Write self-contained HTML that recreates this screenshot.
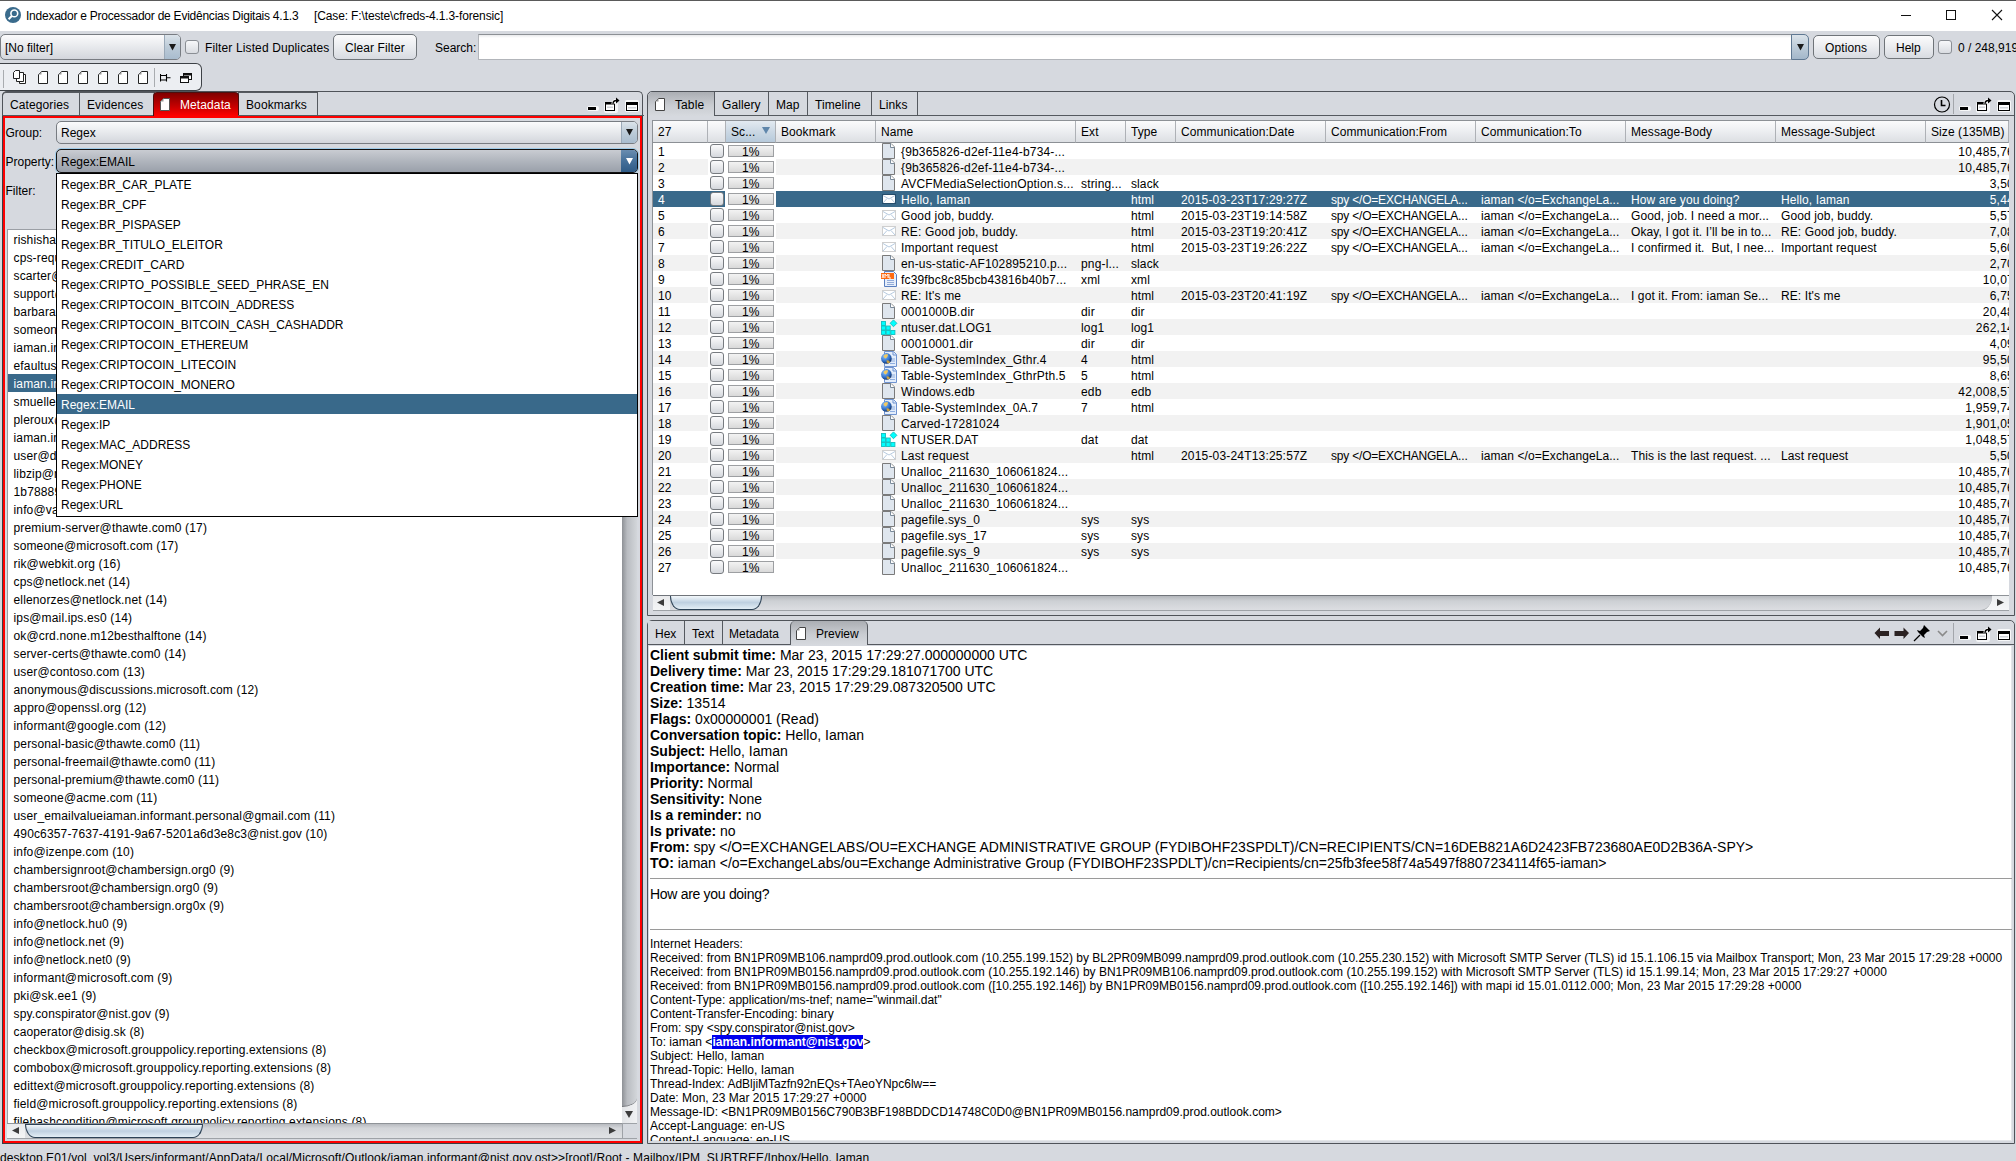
<!DOCTYPE html><html><head><meta charset="utf-8"><style>
*{margin:0;padding:0;box-sizing:border-box}
html,body{width:2016px;height:1161px;overflow:hidden;background:#d6d9df;font-family:"Liberation Sans",sans-serif;font-size:12px;color:#000}
div{position:absolute}
.t{white-space:pre}
.btn{border:1px solid #6f7479;border-radius:5px;background:linear-gradient(#fbfbfc,#eceef1 45%,#d8dbe1)}
.combo{border:1px solid #787c82;border-radius:5px;background:linear-gradient(#fbfbfc,#e9ebee 45%,#d3d6dc)}
.carrow{border-left:1px solid #9aa9b8;border-radius:0 4px 4px 0;background:linear-gradient(#dbe3ea,#bccbd8 50%,#a9bcce)}
.chk{border:1px solid #8a8e94;border-radius:3px;background:linear-gradient(#f7f8fa,#d9dce1)}
.tab{border:1px solid #55595f;border-bottom:none;background:#d6d9df}
.hdr{border-right:1px solid #b5b8bd;background:linear-gradient(#f9f9fa,#e8eaed 50%,#d9dce0)}
.pb{border:1px solid #9d9fa2;background:linear-gradient(#f3f3f3,#d9d9d9)}
.rchk{border:1px solid #777b80;border-radius:3px;background:linear-gradient(#fbfbfc,#d5d8dd)}
</style></head><body>
<div style="left:0px;top:0px;width:2016px;height:1px;background:#5a5a5a"></div>
<div style="left:0px;top:1px;width:2016px;height:30px;background:#fff"></div>
<svg style="position:absolute;left:5px;top:7px" width="16" height="16" viewBox="0 0 16 16"><circle cx="8" cy="8" r="8" fill="#3a6b8c"/><circle cx="9.3" cy="6.4" r="3.4" fill="none" stroke="#fff" stroke-width="1.6"/><line x1="7" y1="8.8" x2="3.6" y2="12.2" stroke="#fff" stroke-width="2"/></svg>
<div class="t" style="left:26px;top:9px;line-height:14px;font-size:12px;letter-spacing:-0.24px;color:#000">Indexador e Processador de Evidências Digitais 4.1.3</div>
<div class="t" style="left:314px;top:9px;line-height:14px;font-size:12px;letter-spacing:-0.13px;color:#000">[Case: F:\teste\cfreds-4.1.3-forensic]</div>
<div style="left:1901px;top:15px;width:10px;height:1px;background:#111"></div>
<div style="left:1946px;top:10px;width:10px;height:10px;border:1px solid #111"></div>
<svg style="position:absolute;left:1991px;top:9px" width="12" height="12"><path d="M1 1L11 11M11 1L1 11" stroke="#111" stroke-width="1.1"/></svg>
<div class="combo" style="left:0px;top:34px;width:181px;height:26px;"></div>
<div class="carrow" style="left:164px;top:35px;width:16px;height:24px;"></div>
<svg style="position:absolute;left:169px;top:44px" width="8" height="7"><path d="M0 0H7L3.5 6.5Z" fill="#1a1a1a"/></svg>
<div class="t" style="left:5px;top:41px;line-height:14px;font-size:12px;">[No filter]</div>
<div class="chk" style="left:185px;top:40px;width:14px;height:14px;"></div>
<div class="t" style="left:205px;top:41px;line-height:14px;font-size:12px;letter-spacing:0.13px">Filter Listed Duplicates</div>
<div class="btn" style="left:333px;top:34px;width:84px;height:26px;"></div>
<div class="t" style="left:345px;top:41px;line-height:14px;font-size:12px;letter-spacing:0.1px">Clear Filter</div>
<div class="t" style="left:435px;top:41px;line-height:14px;font-size:12px;">Search:</div>
<div style="left:478px;top:34px;width:1314px;height:26px;background:linear-gradient(#e9eaec,#fff 3px);border:1px solid #b2b5ba;border-top-color:#8c9095;border-right:none"></div>
<div style="left:1791px;top:34px;width:18px;height:26px;border:1px solid #5f7892;border-radius:0 5px 5px 0;background:linear-gradient(#dbe3ea,#bccbd8 50%,#a3b7ca)"></div>
<svg style="position:absolute;left:1797px;top:44px" width="8" height="7"><path d="M0 0H7L3.5 6.5Z" fill="#1a1a1a"/></svg>
<div class="btn" style="left:1813px;top:35px;width:67px;height:24px;"></div>
<div class="t" style="left:1825px;top:41px;line-height:14px;font-size:12px;letter-spacing:0.1px">Options</div>
<div class="btn" style="left:1884px;top:35px;width:50px;height:24px;"></div>
<div class="t" style="left:1896px;top:41px;line-height:14px;font-size:12px;">Help</div>
<div class="chk" style="left:1938px;top:40px;width:14px;height:14px;"></div>
<div class="t" style="left:1958px;top:41px;line-height:14px;font-size:12px;">0 / 248,919</div>
<div style="left:0px;top:63px;width:202px;height:28px;background:#eceef2;border:1px solid #3d4146;border-left:none;border-radius:0 6px 6px 0"></div>
<div style="left:3px;top:70px;width:1px;height:18px;background:#a9acb0"></div>
<div style="left:154px;top:68px;width:1px;height:19px;background:#a9acb0"></div>
<svg style="position:absolute;left:13px;top:70px" width="14" height="15"><path d="M6.5 4.5H12.5V13.5H6.5Z" fill="#fff" stroke="#222"/><path d="M3.5 2.5H10.5V11.5H3.5Z" fill="#fff" stroke="#222"/><path d="M2.5 0.5H6.5V8.5H0.5V2.5Z" fill="#fff" stroke="#222"/></svg>
<svg style="position:absolute;left:38px;top:71px" width="10" height="13"><path d="M3.5 0.5H9.5V12.5H0.5V3.5Z" fill="#fff" stroke="#222"/><path d="M0.5 3.5L3.5 0.5V3.5Z" fill="#999"/></svg>
<svg style="position:absolute;left:58px;top:71px" width="10" height="13"><path d="M3.5 0.5H9.5V12.5H0.5V3.5Z" fill="#fff" stroke="#222"/><path d="M0.5 3.5L3.5 0.5V3.5Z" fill="#999"/></svg>
<svg style="position:absolute;left:78px;top:71px" width="10" height="13"><path d="M3.5 0.5H9.5V12.5H0.5V3.5Z" fill="#fff" stroke="#222"/><path d="M0.5 3.5L3.5 0.5V3.5Z" fill="#999"/></svg>
<svg style="position:absolute;left:98px;top:71px" width="10" height="13"><path d="M3.5 0.5H9.5V12.5H0.5V3.5Z" fill="#fff" stroke="#222"/><path d="M0.5 3.5L3.5 0.5V3.5Z" fill="#999"/></svg>
<svg style="position:absolute;left:118px;top:71px" width="10" height="13"><path d="M3.5 0.5H9.5V12.5H0.5V3.5Z" fill="#fff" stroke="#222"/><path d="M0.5 3.5L3.5 0.5V3.5Z" fill="#999"/></svg>
<svg style="position:absolute;left:138px;top:71px" width="10" height="13"><path d="M3.5 0.5H9.5V12.5H0.5V3.5Z" fill="#fff" stroke="#222"/><path d="M0.5 3.5L3.5 0.5V3.5Z" fill="#999"/></svg>
<svg style="position:absolute;left:160px;top:74px" width="12" height="9"><path d="M0.5 0V7.5M6.5 0V7.5M0.5 1.5H6.5M0.5 6H6.5M6.5 3.8H10.5" stroke="#000" stroke-width="1.1" fill="none"/></svg>
<svg style="position:absolute;left:180px;top:73px" width="12" height="10"><rect x="3.5" y="0.5" width="8" height="6" fill="#fff" stroke="#111"/><rect x="3.5" y="0.5" width="8" height="2" fill="#111"/><rect x="0.5" y="3.5" width="8" height="6" fill="#fff" stroke="#111"/><rect x="0.5" y="3.5" width="8" height="2" fill="#111"/></svg>
<div style="left:2px;top:92px;width:78px;height:24px;border:1px solid #55595f;border-bottom:none;border-radius:4px 0 0 0;background:#d6d9df"></div>
<div style="left:79px;top:92px;width:76px;height:24px;border:1px solid #55595f;border-bottom:none;background:#d6d9df"></div>
<div style="left:238px;top:92px;width:80px;height:24px;border:1px solid #55595f;border-bottom:none;background:#d6d9df"></div>
<div style="left:153px;top:92px;width:86px;height:24px;border:1px solid #4a1010;border-bottom:none;border-radius:4px 4px 0 0;background:linear-gradient(#800000,#c80000 60%,#ff0000)"></div>
<div style="left:2px;top:115px;width:151px;height:1px;background:#55595f"></div>
<div style="left:238px;top:115px;width:406px;height:1px;background:#55595f"></div>
<div class="t" style="left:10px;top:98px;line-height:14px;font-size:12px;letter-spacing:0.1px">Categories</div>
<div class="t" style="left:87px;top:98px;line-height:14px;font-size:12px;letter-spacing:0.1px">Evidences</div>
<svg style="position:absolute;left:160px;top:98px" width="10" height="13"><path d="M3.5 0.5H9.5V12.5H0.5V3.5Z" fill="#fff" stroke="#555"/><path d="M0.5 3.5L3.5 0.5V3.5Z" fill="#999"/></svg>
<div class="t" style="left:180px;top:98px;line-height:14px;font-size:12px;color:#fff;letter-spacing:0.1px">Metadata</div>
<div class="t" style="left:246px;top:98px;line-height:14px;font-size:12px;letter-spacing:0.1px">Bookmarks</div>
<div style="left:2px;top:91px;width:641px;height:26px;border:1px solid #4f5359;border-bottom:none;border-radius:5px 5px 0 0"></div>
<svg style="position:absolute;left:586px;top:97px" width="54" height="16"><rect x="1" y="9" width="12" height="5" rx="2" fill="#fff" opacity="0.8"/><rect x="2" y="10" width="8" height="3" fill="#000"/><rect x="18" y="5" width="14" height="11" rx="2" fill="#fff" opacity="0.7"/><rect x="19.5" y="5.5" width="9" height="8" fill="#fff" stroke="#000"/><rect x="19" y="5" width="10" height="2.5" fill="#000"/><rect x="21" y="9.5" width="6" height="1.5" fill="#d0d3d8"/><path d="M27 7Q27 3.5 30.5 3.5" stroke="#fff" stroke-width="3" fill="none"/><path d="M27 7Q27 3.5 30.5 3.5" stroke="#000" stroke-width="1.4" fill="none"/><path d="M30 0.5L33.5 3.5L30 6.5Z" fill="#000"/><rect x="39" y="3" width="14" height="12" rx="2" fill="#fff" opacity="0.8"/><rect x="40.5" y="5.5" width="11" height="8" fill="#fff" stroke="#000"/><rect x="40" y="5" width="12" height="3" fill="#000"/><rect x="42" y="10" width="8" height="1.5" fill="#d0d3d8"/></svg>
<div style="left:2px;top:116px;width:641px;height:1028px;border:1px solid #3c3f44;border-top:none"></div>
<div style="left:3px;top:116px;width:639px;height:1027px;border:2px solid #ff0000"></div>
<div class="t" style="left:5.5px;top:126px;line-height:14px;font-size:12px;">Group:</div>
<div class="combo" style="left:56px;top:121px;width:582px;height:23px;"></div>
<div class="carrow" style="left:621px;top:122px;width:16px;height:21px;"></div>
<svg style="position:absolute;left:626px;top:129px" width="8" height="7"><path d="M0 0H7L3.5 6.5Z" fill="#1a1a1a"/></svg>
<div class="t" style="left:61px;top:126px;line-height:14px;font-size:12px;">Regex</div>
<div class="t" style="left:5.5px;top:155px;line-height:14px;font-size:12px;">Property:</div>
<div style="left:55px;top:148px;width:584px;height:26px;border:1px solid #9fcbe9;border-radius:6px"></div>
<div style="left:56px;top:149px;width:582px;height:24px;border:1px solid #111;border-radius:5px;background:linear-gradient(#c9ccd2,#b0b5bd 50%,#9aa0aa)"></div>
<div style="left:621px;top:150px;width:16px;height:22px;border-radius:0 4px 4px 0;background:linear-gradient(#6a8db0,#45709a 50%,#2f5b86)"></div>
<svg style="position:absolute;left:626px;top:158px" width="8" height="7"><path d="M0 0H7L3.5 6.5Z" fill="#fff"/></svg>
<div class="t" style="left:61px;top:155px;line-height:14px;font-size:12px;">Regex:EMAIL</div>
<div class="t" style="left:5.5px;top:184px;line-height:14px;font-size:12px;">Filter:</div>
<div style="left:7px;top:229px;width:630px;height:910px;border:1px solid #9b9fa5;border-right:none;border-bottom:none;background:#fff;overflow:hidden"><div style="left:0;top:0;width:614px;height:893px;background:#fff;overflow:hidden"><div class="t" style="left:5.5px;top:3px;line-height:14px;font-size:12px;letter-spacing:0.15px">rishishah@example.com (22)</div><div class="t" style="left:5.5px;top:21px;line-height:14px;font-size:12px;letter-spacing:0.15px">cps-requests@digicert.com (21)</div><div class="t" style="left:5.5px;top:39px;line-height:14px;font-size:12px;letter-spacing:0.15px">scarter@example.com (20)</div><div class="t" style="left:5.5px;top:57px;line-height:14px;font-size:12px;letter-spacing:0.15px">support@example.com (19)</div><div class="t" style="left:5.5px;top:75px;line-height:14px;font-size:12px;letter-spacing:0.15px">barbara@example.com (19)</div><div class="t" style="left:5.5px;top:93px;line-height:14px;font-size:12px;letter-spacing:0.15px">someone@example.com (19)</div><div class="t" style="left:5.5px;top:111px;line-height:14px;font-size:12px;letter-spacing:0.15px">iaman.informant@nist.gov (18)</div><div class="t" style="left:5.5px;top:129px;line-height:14px;font-size:12px;letter-spacing:0.15px">efaultuser@example.com (18)</div><div style="left:0;top:144px;width:614px;height:18px;background:#39698a"></div><div class="t" style="left:5.5px;top:147px;line-height:14px;font-size:12px;letter-spacing:0.15px;color:#fff">iaman.informant@nist.gov (18)</div><div class="t" style="left:5.5px;top:165px;line-height:14px;font-size:12px;letter-spacing:0.15px">smueller@example.com (18)</div><div class="t" style="left:5.5px;top:183px;line-height:14px;font-size:12px;letter-spacing:0.15px">pleroux@example.com (18)</div><div class="t" style="left:5.5px;top:201px;line-height:14px;font-size:12px;letter-spacing:0.15px">iaman.informant.personal@gmail.com (18)</div><div class="t" style="left:5.5px;top:219px;line-height:14px;font-size:12px;letter-spacing:0.15px">user@domain.com (17)</div><div class="t" style="left:5.5px;top:237px;line-height:14px;font-size:12px;letter-spacing:0.15px">libzip@nih.at (17)</div><div class="t" style="left:5.5px;top:255px;line-height:14px;font-size:12px;letter-spacing:0.15px">1b78889d@example.com (17)</div><div class="t" style="left:5.5px;top:273px;line-height:14px;font-size:12px;letter-spacing:0.15px">info@valicert.com (17)</div><div class="t" style="left:5.5px;top:291px;line-height:14px;font-size:12px;letter-spacing:0.15px">premium-server@thawte.com0 (17)</div><div class="t" style="left:5.5px;top:309px;line-height:14px;font-size:12px;letter-spacing:0.15px">someone@microsoft.com (17)</div><div class="t" style="left:5.5px;top:327px;line-height:14px;font-size:12px;letter-spacing:0.15px">rik@webkit.org (16)</div><div class="t" style="left:5.5px;top:345px;line-height:14px;font-size:12px;letter-spacing:0.15px">cps@netlock.net (14)</div><div class="t" style="left:5.5px;top:363px;line-height:14px;font-size:12px;letter-spacing:0.15px">ellenorzes@netlock.net (14)</div><div class="t" style="left:5.5px;top:381px;line-height:14px;font-size:12px;letter-spacing:0.15px">ips@mail.ips.es0 (14)</div><div class="t" style="left:5.5px;top:399px;line-height:14px;font-size:12px;letter-spacing:0.15px">ok@crd.none.m12besthalftone (14)</div><div class="t" style="left:5.5px;top:417px;line-height:14px;font-size:12px;letter-spacing:0.15px">server-certs@thawte.com0 (14)</div><div class="t" style="left:5.5px;top:435px;line-height:14px;font-size:12px;letter-spacing:0.15px">user@contoso.com (13)</div><div class="t" style="left:5.5px;top:453px;line-height:14px;font-size:12px;letter-spacing:0.15px">anonymous@discussions.microsoft.com (12)</div><div class="t" style="left:5.5px;top:471px;line-height:14px;font-size:12px;letter-spacing:0.15px">appro@openssl.org (12)</div><div class="t" style="left:5.5px;top:489px;line-height:14px;font-size:12px;letter-spacing:0.15px">informant@google.com (12)</div><div class="t" style="left:5.5px;top:507px;line-height:14px;font-size:12px;letter-spacing:0.15px">personal-basic@thawte.com0 (11)</div><div class="t" style="left:5.5px;top:525px;line-height:14px;font-size:12px;letter-spacing:0.15px">personal-freemail@thawte.com0 (11)</div><div class="t" style="left:5.5px;top:543px;line-height:14px;font-size:12px;letter-spacing:0.15px">personal-premium@thawte.com0 (11)</div><div class="t" style="left:5.5px;top:561px;line-height:14px;font-size:12px;letter-spacing:0.15px">someone@acme.com (11)</div><div class="t" style="left:5.5px;top:579px;line-height:14px;font-size:12px;letter-spacing:0.15px">user_emailvalueiaman.informant.personal@gmail.com (11)</div><div class="t" style="left:5.5px;top:597px;line-height:14px;font-size:12px;letter-spacing:0.15px">490c6357-7637-4191-9a67-5201a6d3e8c3@nist.gov (10)</div><div class="t" style="left:5.5px;top:615px;line-height:14px;font-size:12px;letter-spacing:0.15px">info@izenpe.com (10)</div><div class="t" style="left:5.5px;top:633px;line-height:14px;font-size:12px;letter-spacing:0.15px">chambersignroot@chambersign.org0 (9)</div><div class="t" style="left:5.5px;top:651px;line-height:14px;font-size:12px;letter-spacing:0.15px">chambersroot@chambersign.org0 (9)</div><div class="t" style="left:5.5px;top:669px;line-height:14px;font-size:12px;letter-spacing:0.15px">chambersroot@chambersign.org0x (9)</div><div class="t" style="left:5.5px;top:687px;line-height:14px;font-size:12px;letter-spacing:0.15px">info@netlock.hu0 (9)</div><div class="t" style="left:5.5px;top:705px;line-height:14px;font-size:12px;letter-spacing:0.15px">info@netlock.net (9)</div><div class="t" style="left:5.5px;top:723px;line-height:14px;font-size:12px;letter-spacing:0.15px">info@netlock.net0 (9)</div><div class="t" style="left:5.5px;top:741px;line-height:14px;font-size:12px;letter-spacing:0.15px">informant@microsoft.com (9)</div><div class="t" style="left:5.5px;top:759px;line-height:14px;font-size:12px;letter-spacing:0.15px">pki@sk.ee1 (9)</div><div class="t" style="left:5.5px;top:777px;line-height:14px;font-size:12px;letter-spacing:0.15px">spy.conspirator@nist.gov (9)</div><div class="t" style="left:5.5px;top:795px;line-height:14px;font-size:12px;letter-spacing:0.15px">caoperator@disig.sk (8)</div><div class="t" style="left:5.5px;top:813px;line-height:14px;font-size:12px;letter-spacing:0.15px">checkbox@microsoft.grouppolicy.reporting.extensions (8)</div><div class="t" style="left:5.5px;top:831px;line-height:14px;font-size:12px;letter-spacing:0.15px">combobox@microsoft.grouppolicy.reporting.extensions (8)</div><div class="t" style="left:5.5px;top:849px;line-height:14px;font-size:12px;letter-spacing:0.15px">edittext@microsoft.grouppolicy.reporting.extensions (8)</div><div class="t" style="left:5.5px;top:867px;line-height:14px;font-size:12px;letter-spacing:0.15px">field@microsoft.grouppolicy.reporting.extensions (8)</div><div class="t" style="left:5.5px;top:885px;line-height:14px;font-size:12px;letter-spacing:0.15px">filehashcondition@microsoft.grouppolicy.reporting.extensions (8)</div></div></div>
<div style="left:622px;top:230px;width:15px;height:893px;background:linear-gradient(90deg,#e3e5e8,#f0f1f3)"></div>
<div style="left:622px;top:230px;width:15px;height:877px;background:linear-gradient(90deg,#8e9196,#b9bcc1 35%,#d3d6da);border-bottom-right-radius:15px 9px;border-bottom:1px solid #6d7075"></div>
<svg style="position:absolute;left:625px;top:1111px" width="10" height="8"><path d="M0 0H8L4 7Z" fill="#3c3c3c"/></svg>
<div style="left:7px;top:1123px;width:615px;height:16px;background:linear-gradient(#b8bbc0,#d3d5d9 30%,#dfe1e4);border-top:1px solid #8f9398;border-bottom:1px solid #9ea2a7"></div>
<div style="left:7px;top:1124px;width:18px;height:14px;background:linear-gradient(#e9eaec,#f4f5f6)"></div>
<div style="left:25px;top:1124px;width:178px;height:14px;border:1px solid #2d4256;border-radius:0 0 10px 10px/0 0 14px 14px;background:linear-gradient(#f3f8fb,#bfd0e0 50%,#e3eef5)"></div>
<svg style="position:absolute;left:12px;top:1127px" width="8" height="8"><path d="M7 0V7L0 3.5Z" fill="#3c3c3c"/></svg>
<svg style="position:absolute;left:609px;top:1127px" width="8" height="8"><path d="M0 0V7L7 3.5Z" fill="#3c3c3c"/></svg>
<div style="left:622px;top:1123px;width:15px;height:16px;background:#d6d9df;border:1px solid #9ea2a7;border-right:none"></div>
<div style="left:56px;top:173px;width:582px;height:344px;background:#fff;border:1px solid #000"></div>
<div class="t" style="left:61px;top:178px;line-height:14px;font-size:12px;">Regex:BR_CAR_PLATE</div>
<div class="t" style="left:61px;top:198px;line-height:14px;font-size:12px;">Regex:BR_CPF</div>
<div class="t" style="left:61px;top:218px;line-height:14px;font-size:12px;">Regex:BR_PISPASEP</div>
<div class="t" style="left:61px;top:238px;line-height:14px;font-size:12px;">Regex:BR_TITULO_ELEITOR</div>
<div class="t" style="left:61px;top:258px;line-height:14px;font-size:12px;">Regex:CREDIT_CARD</div>
<div class="t" style="left:61px;top:278px;line-height:14px;font-size:12px;">Regex:CRIPTO_POSSIBLE_SEED_PHRASE_EN</div>
<div class="t" style="left:61px;top:298px;line-height:14px;font-size:12px;">Regex:CRIPTOCOIN_BITCOIN_ADDRESS</div>
<div class="t" style="left:61px;top:318px;line-height:14px;font-size:12px;">Regex:CRIPTOCOIN_BITCOIN_CASH_CASHADDR</div>
<div class="t" style="left:61px;top:338px;line-height:14px;font-size:12px;">Regex:CRIPTOCOIN_ETHEREUM</div>
<div class="t" style="left:61px;top:358px;line-height:14px;font-size:12px;">Regex:CRIPTOCOIN_LITECOIN</div>
<div class="t" style="left:61px;top:378px;line-height:14px;font-size:12px;">Regex:CRIPTOCOIN_MONERO</div>
<div style="left:57px;top:394px;width:580px;height:20px;background:#39698a"></div>
<div class="t" style="left:61px;top:398px;line-height:14px;font-size:12px;color:#fff">Regex:EMAIL</div>
<div class="t" style="left:61px;top:418px;line-height:14px;font-size:12px;">Regex:IP</div>
<div class="t" style="left:61px;top:438px;line-height:14px;font-size:12px;">Regex:MAC_ADDRESS</div>
<div class="t" style="left:61px;top:458px;line-height:14px;font-size:12px;">Regex:MONEY</div>
<div class="t" style="left:61px;top:478px;line-height:14px;font-size:12px;">Regex:PHONE</div>
<div class="t" style="left:61px;top:498px;line-height:14px;font-size:12px;">Regex:URL</div>
<div style="left:647px;top:91px;width:1368px;height:525px;border:1px solid #4f5359;border-radius:5px 5px 0 0;background:#d6d9df"></div>
<div style="left:714px;top:115px;width:1300px;height:1px;background:#55595f"></div>
<div style="left:648px;top:92px;width:66px;height:24px;border-radius:5px 0 0 0;background:linear-gradient(#abaeb3,#c9ccd1 55%,#d6d9de)"></div>
<div style="left:714px;top:92px;width:1px;height:24px;background:#55595f"></div>
<div style="left:768px;top:92px;width:1px;height:24px;background:#55595f"></div>
<div style="left:807px;top:92px;width:1px;height:24px;background:#55595f"></div>
<div style="left:871px;top:92px;width:1px;height:24px;background:#55595f"></div>
<div style="left:917px;top:92px;width:1px;height:24px;background:#55595f"></div>
<svg style="position:absolute;left:655px;top:98px" width="10" height="13"><path d="M3.5 0.5H9.5V12.5H0.5V3.5Z" fill="#fff" stroke="#444"/><path d="M0.5 3.5L3.5 0.5V3.5Z" fill="#999"/></svg>
<div class="t" style="left:675px;top:98px;line-height:14px;font-size:12px;letter-spacing:0.1px">Table</div>
<div class="t" style="left:722px;top:98px;line-height:14px;font-size:12px;letter-spacing:0.1px">Gallery</div>
<div class="t" style="left:776px;top:98px;line-height:14px;font-size:12px;letter-spacing:0.1px">Map</div>
<div class="t" style="left:815px;top:98px;line-height:14px;font-size:12px;letter-spacing:0.1px">Timeline</div>
<div class="t" style="left:879px;top:98px;line-height:14px;font-size:12px;letter-spacing:0.1px">Links</div>
<svg style="position:absolute;left:1933px;top:96px" width="18" height="17"><circle cx="9" cy="8.5" r="7.5" fill="none" stroke="#000" stroke-width="1.2"/><path d="M8.5 4V9.5H12.5" stroke="#000" stroke-width="1.6" fill="none"/></svg>
<div style="left:1953px;top:94px;width:1px;height:20px;background:#a3a6ab"></div>
<svg style="position:absolute;left:1958px;top:97px" width="54" height="16"><rect x="1" y="9" width="12" height="5" rx="2" fill="#fff" opacity="0.8"/><rect x="2" y="10" width="8" height="3" fill="#000"/><rect x="18" y="5" width="14" height="11" rx="2" fill="#fff" opacity="0.7"/><rect x="19.5" y="5.5" width="9" height="8" fill="#fff" stroke="#000"/><rect x="19" y="5" width="10" height="2.5" fill="#000"/><rect x="21" y="9.5" width="6" height="1.5" fill="#d0d3d8"/><path d="M27 7Q27 3.5 30.5 3.5" stroke="#fff" stroke-width="3" fill="none"/><path d="M27 7Q27 3.5 30.5 3.5" stroke="#000" stroke-width="1.4" fill="none"/><path d="M30 0.5L33.5 3.5L30 6.5Z" fill="#000"/><rect x="39" y="3" width="14" height="12" rx="2" fill="#fff" opacity="0.8"/><rect x="40.5" y="5.5" width="11" height="8" fill="#fff" stroke="#000"/><rect x="40" y="5" width="12" height="3" fill="#000"/><rect x="42" y="10" width="8" height="1.5" fill="#d0d3d8"/></svg>
<div style="left:652px;top:120px;width:1357px;height:475px;background:#fff;border-left:1px solid #8d9196;border-top:1px solid #8d9196"></div>
<div style="left:653px;top:121px;width:55px;height:22px;border-right:1px solid #aeb1b6;border-bottom:1px solid #8c9095;background:linear-gradient(#fbfbfc,#eceef1 50%,#dcdfe3)"></div>
<div class="t" style="left:658px;top:125px;line-height:14px;font-size:12px;letter-spacing:0.08px">27</div>
<div style="left:708px;top:121px;width:18px;height:22px;border-right:1px solid #aeb1b6;border-bottom:1px solid #8c9095;background:linear-gradient(#fbfbfc,#eceef1 50%,#dcdfe3)"></div>
<div style="left:726px;top:121px;width:50px;height:22px;border-right:1px solid #aeb1b6;border-bottom:1px solid #8c9095;background:linear-gradient(#e3eaf1,#cbd8e4 50%,#b7cadb)"></div>
<div class="t" style="left:731px;top:125px;line-height:14px;font-size:12px;letter-spacing:0.08px">Sc...</div>
<div style="left:776px;top:121px;width:100px;height:22px;border-right:1px solid #aeb1b6;border-bottom:1px solid #8c9095;background:linear-gradient(#fbfbfc,#eceef1 50%,#dcdfe3)"></div>
<div class="t" style="left:781px;top:125px;line-height:14px;font-size:12px;letter-spacing:0.08px">Bookmark</div>
<div style="left:876px;top:121px;width:200px;height:22px;border-right:1px solid #aeb1b6;border-bottom:1px solid #8c9095;background:linear-gradient(#fbfbfc,#eceef1 50%,#dcdfe3)"></div>
<div class="t" style="left:881px;top:125px;line-height:14px;font-size:12px;letter-spacing:0.08px">Name</div>
<div style="left:1076px;top:121px;width:50px;height:22px;border-right:1px solid #aeb1b6;border-bottom:1px solid #8c9095;background:linear-gradient(#fbfbfc,#eceef1 50%,#dcdfe3)"></div>
<div class="t" style="left:1081px;top:125px;line-height:14px;font-size:12px;letter-spacing:0.08px">Ext</div>
<div style="left:1126px;top:121px;width:50px;height:22px;border-right:1px solid #aeb1b6;border-bottom:1px solid #8c9095;background:linear-gradient(#fbfbfc,#eceef1 50%,#dcdfe3)"></div>
<div class="t" style="left:1131px;top:125px;line-height:14px;font-size:12px;letter-spacing:0.08px">Type</div>
<div style="left:1176px;top:121px;width:150px;height:22px;border-right:1px solid #aeb1b6;border-bottom:1px solid #8c9095;background:linear-gradient(#fbfbfc,#eceef1 50%,#dcdfe3)"></div>
<div class="t" style="left:1181px;top:125px;line-height:14px;font-size:12px;letter-spacing:0.08px">Communication:Date</div>
<div style="left:1326px;top:121px;width:150px;height:22px;border-right:1px solid #aeb1b6;border-bottom:1px solid #8c9095;background:linear-gradient(#fbfbfc,#eceef1 50%,#dcdfe3)"></div>
<div class="t" style="left:1331px;top:125px;line-height:14px;font-size:12px;letter-spacing:0.08px">Communication:From</div>
<div style="left:1476px;top:121px;width:150px;height:22px;border-right:1px solid #aeb1b6;border-bottom:1px solid #8c9095;background:linear-gradient(#fbfbfc,#eceef1 50%,#dcdfe3)"></div>
<div class="t" style="left:1481px;top:125px;line-height:14px;font-size:12px;letter-spacing:0.08px">Communication:To</div>
<div style="left:1626px;top:121px;width:150px;height:22px;border-right:1px solid #aeb1b6;border-bottom:1px solid #8c9095;background:linear-gradient(#fbfbfc,#eceef1 50%,#dcdfe3)"></div>
<div class="t" style="left:1631px;top:125px;line-height:14px;font-size:12px;letter-spacing:0.08px">Message-Body</div>
<div style="left:1776px;top:121px;width:150px;height:22px;border-right:1px solid #aeb1b6;border-bottom:1px solid #8c9095;background:linear-gradient(#fbfbfc,#eceef1 50%,#dcdfe3)"></div>
<div class="t" style="left:1781px;top:125px;line-height:14px;font-size:12px;letter-spacing:0.08px">Message-Subject</div>
<div style="left:1926px;top:121px;width:83px;height:22px;border-right:1px solid #aeb1b6;border-bottom:1px solid #8c9095;background:linear-gradient(#fbfbfc,#eceef1 50%,#dcdfe3)"></div>
<div class="t" style="left:1931px;top:125px;line-height:14px;font-size:12px;letter-spacing:0.08px">Size (135MB)</div>
<svg style="position:absolute;left:762px;top:127px" width="9" height="8"><path d="M0 0H8L4 7Z" fill="#5f86ab"/></svg>
<div style="left:653px;top:143px;width:1356px;height:452px;background:#fff"></div>
<div class="t" style="left:658px;top:145px;line-height:14px;font-size:12px;">1</div>
<div class="rchk" style="left:710px;top:144px;width:14px;height:14px;"></div>
<div class="pb" style="left:728px;top:145px;width:46px;height:12px;"></div>
<div class="t" style="left:742px;top:145px;line-height:14px;font-size:12px;">1%</div>
<svg style="position:absolute;left:881px;top:143px" width="15" height="16"><path d="M1.5 0.5H10L13.5 4V15.5H1.5Z" fill="#dfe6ee" stroke="#7a7a7a"/><path d="M9.5 0.5V4.5H13.5" fill="#fff" stroke="#7a8a9a"/></svg>
<div class="t" style="left:901px;top:145px;line-height:14px;font-size:12px;letter-spacing:0.17px">{9b365826-d2ef-11e4-b734-...</div>
<div style="left:1926px;top:143px;width:83px;height:16px;overflow:hidden"><div class="t" style="right:-5px;top:2px;line-height:14px;letter-spacing:0.25px;">10,485,76</div></div>
<div style="left:653px;top:159px;width:55px;height:16px;background:#f2f2f2"></div>
<div style="left:776px;top:159px;width:1233px;height:16px;background:#f2f2f2"></div>
<div class="t" style="left:658px;top:161px;line-height:14px;font-size:12px;">2</div>
<div class="rchk" style="left:710px;top:160px;width:14px;height:14px;"></div>
<div class="pb" style="left:728px;top:161px;width:46px;height:12px;"></div>
<div class="t" style="left:742px;top:161px;line-height:14px;font-size:12px;">1%</div>
<svg style="position:absolute;left:881px;top:159px" width="15" height="16"><path d="M1.5 0.5H10L13.5 4V15.5H1.5Z" fill="#dfe6ee" stroke="#7a7a7a"/><path d="M9.5 0.5V4.5H13.5" fill="#fff" stroke="#7a8a9a"/></svg>
<div class="t" style="left:901px;top:161px;line-height:14px;font-size:12px;letter-spacing:0.17px">{9b365826-d2ef-11e4-b734-...</div>
<div style="left:1926px;top:159px;width:83px;height:16px;overflow:hidden"><div class="t" style="right:-5px;top:2px;line-height:14px;letter-spacing:0.25px;">10,485,76</div></div>
<div class="t" style="left:658px;top:177px;line-height:14px;font-size:12px;">3</div>
<div class="rchk" style="left:710px;top:176px;width:14px;height:14px;"></div>
<div class="pb" style="left:728px;top:177px;width:46px;height:12px;"></div>
<div class="t" style="left:742px;top:177px;line-height:14px;font-size:12px;">1%</div>
<svg style="position:absolute;left:881px;top:175px" width="15" height="16"><path d="M1.5 0.5H10L13.5 4V15.5H1.5Z" fill="#dfe6ee" stroke="#7a7a7a"/><path d="M9.5 0.5V4.5H13.5" fill="#fff" stroke="#7a8a9a"/></svg>
<div class="t" style="left:901px;top:177px;line-height:14px;font-size:12px;letter-spacing:0.17px">AVCFMediaSelectionOption.s...</div>
<div class="t" style="left:1081px;top:177px;line-height:14px;font-size:12px;letter-spacing:0.17px">string...</div>
<div class="t" style="left:1131px;top:177px;line-height:14px;font-size:12px;letter-spacing:0.1px">slack</div>
<div style="left:1926px;top:175px;width:83px;height:16px;overflow:hidden"><div class="t" style="right:-5px;top:2px;line-height:14px;letter-spacing:0.25px;">3,50</div></div>
<div style="left:653px;top:191px;width:72px;height:16px;background:#39698a"></div>
<div style="left:776px;top:191px;width:1233px;height:16px;background:#39698a"></div>
<div class="t" style="left:658px;top:193px;line-height:14px;font-size:12px;color:#fff;">4</div>
<div class="rchk" style="left:710px;top:192px;width:14px;height:14px;"></div>
<div class="pb" style="left:728px;top:193px;width:46px;height:12px;"></div>
<div class="t" style="left:742px;top:193px;line-height:14px;font-size:12px;">1%</div>
<svg style="position:absolute;left:881px;top:191px" width="16" height="16"><rect x="1.5" y="3.5" width="13" height="9" fill="#fff" stroke="#264d6b"/><path d="M2 4.5L8 8L14 4.5M2 12L6 7.5M14 12L10 7.5" stroke="#b7cbe0" fill="none"/></svg>
<div class="t" style="left:901px;top:193px;line-height:14px;font-size:12px;color:#fff;letter-spacing:0.17px">Hello, Iaman</div>
<div class="t" style="left:1131px;top:193px;line-height:14px;font-size:12px;color:#fff;letter-spacing:0.1px">html</div>
<div class="t" style="left:1181px;top:193px;line-height:14px;font-size:12px;color:#fff;letter-spacing:0.18px">2015-03-23T17:29:27Z</div>
<div class="t" style="left:1331px;top:193px;line-height:14px;font-size:12px;color:#fff;letter-spacing:-0.2px">spy &lt;/O=EXCHANGELA...</div>
<div class="t" style="left:1481px;top:193px;line-height:14px;font-size:12px;color:#fff;letter-spacing:0.07px">iaman &lt;/o=ExchangeLa...</div>
<div class="t" style="left:1631px;top:193px;line-height:14px;font-size:12px;color:#fff;letter-spacing:0.1px">How are you doing?</div>
<div class="t" style="left:1781px;top:193px;line-height:14px;font-size:12px;color:#fff;letter-spacing:0.1px">Hello, Iaman</div>
<div style="left:1926px;top:191px;width:83px;height:16px;overflow:hidden"><div class="t" style="right:-5px;top:2px;line-height:14px;letter-spacing:0.25px;color:#fff;">5,44</div></div>
<div class="t" style="left:658px;top:209px;line-height:14px;font-size:12px;">5</div>
<div class="rchk" style="left:710px;top:208px;width:14px;height:14px;"></div>
<div class="pb" style="left:728px;top:209px;width:46px;height:12px;"></div>
<div class="t" style="left:742px;top:209px;line-height:14px;font-size:12px;">1%</div>
<svg style="position:absolute;left:881px;top:207px" width="16" height="16"><rect x="1.5" y="3.5" width="13" height="9" fill="#fff" stroke="#cfcfcf"/><path d="M2 4.5L8 8L14 4.5M2 12L6 7.5M14 12L10 7.5" stroke="#b7cbe0" fill="none"/></svg>
<div class="t" style="left:901px;top:209px;line-height:14px;font-size:12px;letter-spacing:0.17px">Good job, buddy.</div>
<div class="t" style="left:1131px;top:209px;line-height:14px;font-size:12px;letter-spacing:0.1px">html</div>
<div class="t" style="left:1181px;top:209px;line-height:14px;font-size:12px;letter-spacing:0.18px">2015-03-23T19:14:58Z</div>
<div class="t" style="left:1331px;top:209px;line-height:14px;font-size:12px;letter-spacing:-0.2px">spy &lt;/O=EXCHANGELA...</div>
<div class="t" style="left:1481px;top:209px;line-height:14px;font-size:12px;letter-spacing:0.07px">iaman &lt;/o=ExchangeLa...</div>
<div class="t" style="left:1631px;top:209px;line-height:14px;font-size:12px;letter-spacing:0.1px">Good, job. I need a mor...</div>
<div class="t" style="left:1781px;top:209px;line-height:14px;font-size:12px;letter-spacing:0.1px">Good job, buddy.</div>
<div style="left:1926px;top:207px;width:83px;height:16px;overflow:hidden"><div class="t" style="right:-5px;top:2px;line-height:14px;letter-spacing:0.25px;">5,57</div></div>
<div style="left:653px;top:223px;width:55px;height:16px;background:#f2f2f2"></div>
<div style="left:776px;top:223px;width:1233px;height:16px;background:#f2f2f2"></div>
<div class="t" style="left:658px;top:225px;line-height:14px;font-size:12px;">6</div>
<div class="rchk" style="left:710px;top:224px;width:14px;height:14px;"></div>
<div class="pb" style="left:728px;top:225px;width:46px;height:12px;"></div>
<div class="t" style="left:742px;top:225px;line-height:14px;font-size:12px;">1%</div>
<svg style="position:absolute;left:881px;top:223px" width="16" height="16"><rect x="1.5" y="3.5" width="13" height="9" fill="#fff" stroke="#cfcfcf"/><path d="M2 4.5L8 8L14 4.5M2 12L6 7.5M14 12L10 7.5" stroke="#b7cbe0" fill="none"/></svg>
<div class="t" style="left:901px;top:225px;line-height:14px;font-size:12px;letter-spacing:0.17px">RE: Good job, buddy.</div>
<div class="t" style="left:1131px;top:225px;line-height:14px;font-size:12px;letter-spacing:0.1px">html</div>
<div class="t" style="left:1181px;top:225px;line-height:14px;font-size:12px;letter-spacing:0.18px">2015-03-23T19:20:41Z</div>
<div class="t" style="left:1331px;top:225px;line-height:14px;font-size:12px;letter-spacing:-0.2px">spy &lt;/O=EXCHANGELA...</div>
<div class="t" style="left:1481px;top:225px;line-height:14px;font-size:12px;letter-spacing:0.07px">iaman &lt;/o=ExchangeLa...</div>
<div class="t" style="left:1631px;top:225px;line-height:14px;font-size:12px;letter-spacing:0.1px">Okay, I got it. I’ll be in to...</div>
<div class="t" style="left:1781px;top:225px;line-height:14px;font-size:12px;letter-spacing:0.1px">RE: Good job, buddy.</div>
<div style="left:1926px;top:223px;width:83px;height:16px;overflow:hidden"><div class="t" style="right:-5px;top:2px;line-height:14px;letter-spacing:0.25px;">7,08</div></div>
<div class="t" style="left:658px;top:241px;line-height:14px;font-size:12px;">7</div>
<div class="rchk" style="left:710px;top:240px;width:14px;height:14px;"></div>
<div class="pb" style="left:728px;top:241px;width:46px;height:12px;"></div>
<div class="t" style="left:742px;top:241px;line-height:14px;font-size:12px;">1%</div>
<svg style="position:absolute;left:881px;top:239px" width="16" height="16"><rect x="1.5" y="3.5" width="13" height="9" fill="#fff" stroke="#cfcfcf"/><path d="M2 4.5L8 8L14 4.5M2 12L6 7.5M14 12L10 7.5" stroke="#b7cbe0" fill="none"/></svg>
<div class="t" style="left:901px;top:241px;line-height:14px;font-size:12px;letter-spacing:0.17px">Important request</div>
<div class="t" style="left:1131px;top:241px;line-height:14px;font-size:12px;letter-spacing:0.1px">html</div>
<div class="t" style="left:1181px;top:241px;line-height:14px;font-size:12px;letter-spacing:0.18px">2015-03-23T19:26:22Z</div>
<div class="t" style="left:1331px;top:241px;line-height:14px;font-size:12px;letter-spacing:-0.2px">spy &lt;/O=EXCHANGELA...</div>
<div class="t" style="left:1481px;top:241px;line-height:14px;font-size:12px;letter-spacing:0.07px">iaman &lt;/o=ExchangeLa...</div>
<div class="t" style="left:1631px;top:241px;line-height:14px;font-size:12px;letter-spacing:0.1px">I confirmed it.  But, I nee...</div>
<div class="t" style="left:1781px;top:241px;line-height:14px;font-size:12px;letter-spacing:0.1px">Important request</div>
<div style="left:1926px;top:239px;width:83px;height:16px;overflow:hidden"><div class="t" style="right:-5px;top:2px;line-height:14px;letter-spacing:0.25px;">5,60</div></div>
<div style="left:653px;top:255px;width:55px;height:16px;background:#f2f2f2"></div>
<div style="left:776px;top:255px;width:1233px;height:16px;background:#f2f2f2"></div>
<div class="t" style="left:658px;top:257px;line-height:14px;font-size:12px;">8</div>
<div class="rchk" style="left:710px;top:256px;width:14px;height:14px;"></div>
<div class="pb" style="left:728px;top:257px;width:46px;height:12px;"></div>
<div class="t" style="left:742px;top:257px;line-height:14px;font-size:12px;">1%</div>
<svg style="position:absolute;left:881px;top:255px" width="15" height="16"><path d="M1.5 0.5H10L13.5 4V15.5H1.5Z" fill="#dfe6ee" stroke="#7a7a7a"/><path d="M9.5 0.5V4.5H13.5" fill="#fff" stroke="#7a8a9a"/></svg>
<div class="t" style="left:901px;top:257px;line-height:14px;font-size:12px;letter-spacing:0.17px">en-us-static-AF102895210.p...</div>
<div class="t" style="left:1081px;top:257px;line-height:14px;font-size:12px;letter-spacing:0.17px">png-l...</div>
<div class="t" style="left:1131px;top:257px;line-height:14px;font-size:12px;letter-spacing:0.1px">slack</div>
<div style="left:1926px;top:255px;width:83px;height:16px;overflow:hidden"><div class="t" style="right:-5px;top:2px;line-height:14px;letter-spacing:0.25px;">2,70</div></div>
<div class="t" style="left:658px;top:273px;line-height:14px;font-size:12px;">9</div>
<div class="rchk" style="left:710px;top:272px;width:14px;height:14px;"></div>
<div class="pb" style="left:728px;top:273px;width:46px;height:12px;"></div>
<div class="t" style="left:742px;top:273px;line-height:14px;font-size:12px;">1%</div>
<svg style="position:absolute;left:881px;top:271px" width="17" height="17"><path d="M3.5 0.5H12.5L15.5 3.5V15.5H3.5Z" fill="#e6eefa" stroke="#5a7fbf"/><path d="M6 9.5H13M6 11.5H13M6 13.5H13" stroke="#7e9bd0" stroke-width="0.8"/><rect x="0" y="2" width="13" height="6" fill="#ff6a10"/><path d="M1 3L3 7M3 3L1 7M4 7V3L5.5 5L7 3V7M8 3V7H10" stroke="#fff" stroke-width="0.9" fill="none"/></svg>
<div class="t" style="left:901px;top:273px;line-height:14px;font-size:12px;letter-spacing:0.17px">fc39fbc8c85bcb43816b40b7...</div>
<div class="t" style="left:1081px;top:273px;line-height:14px;font-size:12px;letter-spacing:0.17px">xml</div>
<div class="t" style="left:1131px;top:273px;line-height:14px;font-size:12px;letter-spacing:0.1px">xml</div>
<div style="left:1926px;top:271px;width:83px;height:16px;overflow:hidden"><div class="t" style="right:-5px;top:2px;line-height:14px;letter-spacing:0.25px;">10,07</div></div>
<div style="left:653px;top:287px;width:55px;height:16px;background:#f2f2f2"></div>
<div style="left:776px;top:287px;width:1233px;height:16px;background:#f2f2f2"></div>
<div class="t" style="left:658px;top:289px;line-height:14px;font-size:12px;">10</div>
<div class="rchk" style="left:710px;top:288px;width:14px;height:14px;"></div>
<div class="pb" style="left:728px;top:289px;width:46px;height:12px;"></div>
<div class="t" style="left:742px;top:289px;line-height:14px;font-size:12px;">1%</div>
<svg style="position:absolute;left:881px;top:287px" width="16" height="16"><rect x="1.5" y="3.5" width="13" height="9" fill="#fff" stroke="#cfcfcf"/><path d="M2 4.5L8 8L14 4.5M2 12L6 7.5M14 12L10 7.5" stroke="#b7cbe0" fill="none"/></svg>
<div class="t" style="left:901px;top:289px;line-height:14px;font-size:12px;letter-spacing:0.17px">RE: It's me</div>
<div class="t" style="left:1131px;top:289px;line-height:14px;font-size:12px;letter-spacing:0.1px">html</div>
<div class="t" style="left:1181px;top:289px;line-height:14px;font-size:12px;letter-spacing:0.18px">2015-03-23T20:41:19Z</div>
<div class="t" style="left:1331px;top:289px;line-height:14px;font-size:12px;letter-spacing:-0.2px">spy &lt;/O=EXCHANGELA...</div>
<div class="t" style="left:1481px;top:289px;line-height:14px;font-size:12px;letter-spacing:0.07px">iaman &lt;/o=ExchangeLa...</div>
<div class="t" style="left:1631px;top:289px;line-height:14px;font-size:12px;letter-spacing:0.1px">I got it. From: iaman Se...</div>
<div class="t" style="left:1781px;top:289px;line-height:14px;font-size:12px;letter-spacing:0.1px">RE: It's me</div>
<div style="left:1926px;top:287px;width:83px;height:16px;overflow:hidden"><div class="t" style="right:-5px;top:2px;line-height:14px;letter-spacing:0.25px;">6,75</div></div>
<div class="t" style="left:658px;top:305px;line-height:14px;font-size:12px;">11</div>
<div class="rchk" style="left:710px;top:304px;width:14px;height:14px;"></div>
<div class="pb" style="left:728px;top:305px;width:46px;height:12px;"></div>
<div class="t" style="left:742px;top:305px;line-height:14px;font-size:12px;">1%</div>
<svg style="position:absolute;left:881px;top:303px" width="15" height="16"><path d="M1.5 0.5H10L13.5 4V15.5H1.5Z" fill="#dfe6ee" stroke="#7a7a7a"/><path d="M9.5 0.5V4.5H13.5" fill="#fff" stroke="#7a8a9a"/></svg>
<div class="t" style="left:901px;top:305px;line-height:14px;font-size:12px;letter-spacing:0.17px">0001000B.dir</div>
<div class="t" style="left:1081px;top:305px;line-height:14px;font-size:12px;letter-spacing:0.17px">dir</div>
<div class="t" style="left:1131px;top:305px;line-height:14px;font-size:12px;letter-spacing:0.1px">dir</div>
<div style="left:1926px;top:303px;width:83px;height:16px;overflow:hidden"><div class="t" style="right:-5px;top:2px;line-height:14px;letter-spacing:0.25px;">20,48</div></div>
<div style="left:653px;top:319px;width:55px;height:16px;background:#f2f2f2"></div>
<div style="left:776px;top:319px;width:1233px;height:16px;background:#f2f2f2"></div>
<div class="t" style="left:658px;top:321px;line-height:14px;font-size:12px;">12</div>
<div class="rchk" style="left:710px;top:320px;width:14px;height:14px;"></div>
<div class="pb" style="left:728px;top:321px;width:46px;height:12px;"></div>
<div class="t" style="left:742px;top:321px;line-height:14px;font-size:12px;">1%</div>
<svg style="position:absolute;left:881px;top:319px" width="17" height="17"><rect x="0.5" y="2.5" width="4" height="4" fill="#00ffff" stroke="#12bfbf" stroke-width="0.9"/><rect x="0.5" y="7.0" width="4" height="4" fill="#00ffff" stroke="#12bfbf" stroke-width="0.9"/><rect x="0.5" y="11.5" width="4" height="4" fill="#00ffff" stroke="#12bfbf" stroke-width="0.9"/><rect x="5.2" y="7.0" width="4" height="4" fill="#00ffff" stroke="#12bfbf" stroke-width="0.9"/><rect x="5.2" y="11.5" width="4" height="4" fill="#00ffff" stroke="#12bfbf" stroke-width="0.9"/><rect x="9.9" y="11.5" width="4" height="4" fill="#00ffff" stroke="#12bfbf" stroke-width="0.9"/><path d="M12.5 0.9L15.9 4.3L12.5 7.7L9.1 4.3Z" fill="#00ffff" stroke="#12bfbf" stroke-width="0.9"/></svg>
<div class="t" style="left:901px;top:321px;line-height:14px;font-size:12px;letter-spacing:0.17px">ntuser.dat.LOG1</div>
<div class="t" style="left:1081px;top:321px;line-height:14px;font-size:12px;letter-spacing:0.17px">log1</div>
<div class="t" style="left:1131px;top:321px;line-height:14px;font-size:12px;letter-spacing:0.1px">log1</div>
<div style="left:1926px;top:319px;width:83px;height:16px;overflow:hidden"><div class="t" style="right:-5px;top:2px;line-height:14px;letter-spacing:0.25px;">262,14</div></div>
<div class="t" style="left:658px;top:337px;line-height:14px;font-size:12px;">13</div>
<div class="rchk" style="left:710px;top:336px;width:14px;height:14px;"></div>
<div class="pb" style="left:728px;top:337px;width:46px;height:12px;"></div>
<div class="t" style="left:742px;top:337px;line-height:14px;font-size:12px;">1%</div>
<svg style="position:absolute;left:881px;top:335px" width="15" height="16"><path d="M1.5 0.5H10L13.5 4V15.5H1.5Z" fill="#dfe6ee" stroke="#7a7a7a"/><path d="M9.5 0.5V4.5H13.5" fill="#fff" stroke="#7a8a9a"/></svg>
<div class="t" style="left:901px;top:337px;line-height:14px;font-size:12px;letter-spacing:0.17px">00010001.dir</div>
<div class="t" style="left:1081px;top:337px;line-height:14px;font-size:12px;letter-spacing:0.17px">dir</div>
<div class="t" style="left:1131px;top:337px;line-height:14px;font-size:12px;letter-spacing:0.1px">dir</div>
<div style="left:1926px;top:335px;width:83px;height:16px;overflow:hidden"><div class="t" style="right:-5px;top:2px;line-height:14px;letter-spacing:0.25px;">4,09</div></div>
<div style="left:653px;top:351px;width:55px;height:16px;background:#f2f2f2"></div>
<div style="left:776px;top:351px;width:1233px;height:16px;background:#f2f2f2"></div>
<div class="t" style="left:658px;top:353px;line-height:14px;font-size:12px;">14</div>
<div class="rchk" style="left:710px;top:352px;width:14px;height:14px;"></div>
<div class="pb" style="left:728px;top:353px;width:46px;height:12px;"></div>
<div class="t" style="left:742px;top:353px;line-height:14px;font-size:12px;">1%</div>
<svg style="position:absolute;left:881px;top:351px" width="17" height="17"><path d="M3.5 0.5H12.5L15.5 3.5V15.5H3.5Z" fill="#e3edfb" stroke="#6f93d0"/><path d="M12 0.5V4H15.5" fill="none" stroke="#6f93d0"/><path d="M10 8H14M10 10H14M9 12.5H14" stroke="#8eaee0"/><defs><radialGradient id="g351" cx="0.35" cy="0.3" r="0.8"><stop offset="0" stop-color="#8fc4ff"/><stop offset="0.6" stop-color="#2f6fc8"/><stop offset="1" stop-color="#0a1f48"/></radialGradient></defs><circle cx="5.4" cy="7.4" r="5.3" fill="url(#g351)"/><path d="M2.5 5C3.5 3.2 5.5 2.8 7 3.5C7 5 6 6.5 4.5 7.5C3.5 7 2.8 6 2.5 5Z" fill="#f0c860"/><path d="M5.5 9.5C7 9 8.5 9.8 9 11.5C8 12.5 6.5 12.5 5.8 11.5Z" fill="#c9a040"/></svg>
<div class="t" style="left:901px;top:353px;line-height:14px;font-size:12px;letter-spacing:0.17px">Table-SystemIndex_Gthr.4</div>
<div class="t" style="left:1081px;top:353px;line-height:14px;font-size:12px;letter-spacing:0.17px">4</div>
<div class="t" style="left:1131px;top:353px;line-height:14px;font-size:12px;letter-spacing:0.1px">html</div>
<div style="left:1926px;top:351px;width:83px;height:16px;overflow:hidden"><div class="t" style="right:-5px;top:2px;line-height:14px;letter-spacing:0.25px;">95,50</div></div>
<div class="t" style="left:658px;top:369px;line-height:14px;font-size:12px;">15</div>
<div class="rchk" style="left:710px;top:368px;width:14px;height:14px;"></div>
<div class="pb" style="left:728px;top:369px;width:46px;height:12px;"></div>
<div class="t" style="left:742px;top:369px;line-height:14px;font-size:12px;">1%</div>
<svg style="position:absolute;left:881px;top:367px" width="17" height="17"><path d="M3.5 0.5H12.5L15.5 3.5V15.5H3.5Z" fill="#e3edfb" stroke="#6f93d0"/><path d="M12 0.5V4H15.5" fill="none" stroke="#6f93d0"/><path d="M10 8H14M10 10H14M9 12.5H14" stroke="#8eaee0"/><defs><radialGradient id="g367" cx="0.35" cy="0.3" r="0.8"><stop offset="0" stop-color="#8fc4ff"/><stop offset="0.6" stop-color="#2f6fc8"/><stop offset="1" stop-color="#0a1f48"/></radialGradient></defs><circle cx="5.4" cy="7.4" r="5.3" fill="url(#g367)"/><path d="M2.5 5C3.5 3.2 5.5 2.8 7 3.5C7 5 6 6.5 4.5 7.5C3.5 7 2.8 6 2.5 5Z" fill="#f0c860"/><path d="M5.5 9.5C7 9 8.5 9.8 9 11.5C8 12.5 6.5 12.5 5.8 11.5Z" fill="#c9a040"/></svg>
<div class="t" style="left:901px;top:369px;line-height:14px;font-size:12px;letter-spacing:0.17px">Table-SystemIndex_GthrPth.5</div>
<div class="t" style="left:1081px;top:369px;line-height:14px;font-size:12px;letter-spacing:0.17px">5</div>
<div class="t" style="left:1131px;top:369px;line-height:14px;font-size:12px;letter-spacing:0.1px">html</div>
<div style="left:1926px;top:367px;width:83px;height:16px;overflow:hidden"><div class="t" style="right:-5px;top:2px;line-height:14px;letter-spacing:0.25px;">8,65</div></div>
<div style="left:653px;top:383px;width:55px;height:16px;background:#f2f2f2"></div>
<div style="left:776px;top:383px;width:1233px;height:16px;background:#f2f2f2"></div>
<div class="t" style="left:658px;top:385px;line-height:14px;font-size:12px;">16</div>
<div class="rchk" style="left:710px;top:384px;width:14px;height:14px;"></div>
<div class="pb" style="left:728px;top:385px;width:46px;height:12px;"></div>
<div class="t" style="left:742px;top:385px;line-height:14px;font-size:12px;">1%</div>
<svg style="position:absolute;left:881px;top:383px" width="15" height="16"><path d="M1.5 0.5H10L13.5 4V15.5H1.5Z" fill="#dfe6ee" stroke="#7a7a7a"/><path d="M9.5 0.5V4.5H13.5" fill="#fff" stroke="#7a8a9a"/></svg>
<div class="t" style="left:901px;top:385px;line-height:14px;font-size:12px;letter-spacing:0.17px">Windows.edb</div>
<div class="t" style="left:1081px;top:385px;line-height:14px;font-size:12px;letter-spacing:0.17px">edb</div>
<div class="t" style="left:1131px;top:385px;line-height:14px;font-size:12px;letter-spacing:0.1px">edb</div>
<div style="left:1926px;top:383px;width:83px;height:16px;overflow:hidden"><div class="t" style="right:-5px;top:2px;line-height:14px;letter-spacing:0.25px;">42,008,57</div></div>
<div class="t" style="left:658px;top:401px;line-height:14px;font-size:12px;">17</div>
<div class="rchk" style="left:710px;top:400px;width:14px;height:14px;"></div>
<div class="pb" style="left:728px;top:401px;width:46px;height:12px;"></div>
<div class="t" style="left:742px;top:401px;line-height:14px;font-size:12px;">1%</div>
<svg style="position:absolute;left:881px;top:399px" width="17" height="17"><path d="M3.5 0.5H12.5L15.5 3.5V15.5H3.5Z" fill="#e3edfb" stroke="#6f93d0"/><path d="M12 0.5V4H15.5" fill="none" stroke="#6f93d0"/><path d="M10 8H14M10 10H14M9 12.5H14" stroke="#8eaee0"/><defs><radialGradient id="g399" cx="0.35" cy="0.3" r="0.8"><stop offset="0" stop-color="#8fc4ff"/><stop offset="0.6" stop-color="#2f6fc8"/><stop offset="1" stop-color="#0a1f48"/></radialGradient></defs><circle cx="5.4" cy="7.4" r="5.3" fill="url(#g399)"/><path d="M2.5 5C3.5 3.2 5.5 2.8 7 3.5C7 5 6 6.5 4.5 7.5C3.5 7 2.8 6 2.5 5Z" fill="#f0c860"/><path d="M5.5 9.5C7 9 8.5 9.8 9 11.5C8 12.5 6.5 12.5 5.8 11.5Z" fill="#c9a040"/></svg>
<div class="t" style="left:901px;top:401px;line-height:14px;font-size:12px;letter-spacing:0.17px">Table-SystemIndex_0A.7</div>
<div class="t" style="left:1081px;top:401px;line-height:14px;font-size:12px;letter-spacing:0.17px">7</div>
<div class="t" style="left:1131px;top:401px;line-height:14px;font-size:12px;letter-spacing:0.1px">html</div>
<div style="left:1926px;top:399px;width:83px;height:16px;overflow:hidden"><div class="t" style="right:-5px;top:2px;line-height:14px;letter-spacing:0.25px;">1,959,74</div></div>
<div style="left:653px;top:415px;width:55px;height:16px;background:#f2f2f2"></div>
<div style="left:776px;top:415px;width:1233px;height:16px;background:#f2f2f2"></div>
<div class="t" style="left:658px;top:417px;line-height:14px;font-size:12px;">18</div>
<div class="rchk" style="left:710px;top:416px;width:14px;height:14px;"></div>
<div class="pb" style="left:728px;top:417px;width:46px;height:12px;"></div>
<div class="t" style="left:742px;top:417px;line-height:14px;font-size:12px;">1%</div>
<svg style="position:absolute;left:881px;top:415px" width="15" height="16"><path d="M1.5 0.5H10L13.5 4V15.5H1.5Z" fill="#dfe6ee" stroke="#7a7a7a"/><path d="M9.5 0.5V4.5H13.5" fill="#fff" stroke="#7a8a9a"/></svg>
<div class="t" style="left:901px;top:417px;line-height:14px;font-size:12px;letter-spacing:0.17px">Carved-17281024</div>
<div style="left:1926px;top:415px;width:83px;height:16px;overflow:hidden"><div class="t" style="right:-5px;top:2px;line-height:14px;letter-spacing:0.25px;">1,901,05</div></div>
<div class="t" style="left:658px;top:433px;line-height:14px;font-size:12px;">19</div>
<div class="rchk" style="left:710px;top:432px;width:14px;height:14px;"></div>
<div class="pb" style="left:728px;top:433px;width:46px;height:12px;"></div>
<div class="t" style="left:742px;top:433px;line-height:14px;font-size:12px;">1%</div>
<svg style="position:absolute;left:881px;top:431px" width="17" height="17"><rect x="0.5" y="2.5" width="4" height="4" fill="#00ffff" stroke="#12bfbf" stroke-width="0.9"/><rect x="0.5" y="7.0" width="4" height="4" fill="#00ffff" stroke="#12bfbf" stroke-width="0.9"/><rect x="0.5" y="11.5" width="4" height="4" fill="#00ffff" stroke="#12bfbf" stroke-width="0.9"/><rect x="5.2" y="7.0" width="4" height="4" fill="#00ffff" stroke="#12bfbf" stroke-width="0.9"/><rect x="5.2" y="11.5" width="4" height="4" fill="#00ffff" stroke="#12bfbf" stroke-width="0.9"/><rect x="9.9" y="11.5" width="4" height="4" fill="#00ffff" stroke="#12bfbf" stroke-width="0.9"/><path d="M12.5 0.9L15.9 4.3L12.5 7.7L9.1 4.3Z" fill="#00ffff" stroke="#12bfbf" stroke-width="0.9"/></svg>
<div class="t" style="left:901px;top:433px;line-height:14px;font-size:12px;letter-spacing:0.17px">NTUSER.DAT</div>
<div class="t" style="left:1081px;top:433px;line-height:14px;font-size:12px;letter-spacing:0.17px">dat</div>
<div class="t" style="left:1131px;top:433px;line-height:14px;font-size:12px;letter-spacing:0.1px">dat</div>
<div style="left:1926px;top:431px;width:83px;height:16px;overflow:hidden"><div class="t" style="right:-5px;top:2px;line-height:14px;letter-spacing:0.25px;">1,048,57</div></div>
<div style="left:653px;top:447px;width:55px;height:16px;background:#f2f2f2"></div>
<div style="left:776px;top:447px;width:1233px;height:16px;background:#f2f2f2"></div>
<div class="t" style="left:658px;top:449px;line-height:14px;font-size:12px;">20</div>
<div class="rchk" style="left:710px;top:448px;width:14px;height:14px;"></div>
<div class="pb" style="left:728px;top:449px;width:46px;height:12px;"></div>
<div class="t" style="left:742px;top:449px;line-height:14px;font-size:12px;">1%</div>
<svg style="position:absolute;left:881px;top:447px" width="16" height="16"><rect x="1.5" y="3.5" width="13" height="9" fill="#fff" stroke="#cfcfcf"/><path d="M2 4.5L8 8L14 4.5M2 12L6 7.5M14 12L10 7.5" stroke="#b7cbe0" fill="none"/></svg>
<div class="t" style="left:901px;top:449px;line-height:14px;font-size:12px;letter-spacing:0.17px">Last request</div>
<div class="t" style="left:1131px;top:449px;line-height:14px;font-size:12px;letter-spacing:0.1px">html</div>
<div class="t" style="left:1181px;top:449px;line-height:14px;font-size:12px;letter-spacing:0.18px">2015-03-24T13:25:57Z</div>
<div class="t" style="left:1331px;top:449px;line-height:14px;font-size:12px;letter-spacing:-0.2px">spy &lt;/O=EXCHANGELA...</div>
<div class="t" style="left:1481px;top:449px;line-height:14px;font-size:12px;letter-spacing:0.07px">iaman &lt;/o=ExchangeLa...</div>
<div class="t" style="left:1631px;top:449px;line-height:14px;font-size:12px;letter-spacing:0.1px">This is the last request. ...</div>
<div class="t" style="left:1781px;top:449px;line-height:14px;font-size:12px;letter-spacing:0.1px">Last request</div>
<div style="left:1926px;top:447px;width:83px;height:16px;overflow:hidden"><div class="t" style="right:-5px;top:2px;line-height:14px;letter-spacing:0.25px;">5,50</div></div>
<div class="t" style="left:658px;top:465px;line-height:14px;font-size:12px;">21</div>
<div class="rchk" style="left:710px;top:464px;width:14px;height:14px;"></div>
<div class="pb" style="left:728px;top:465px;width:46px;height:12px;"></div>
<div class="t" style="left:742px;top:465px;line-height:14px;font-size:12px;">1%</div>
<svg style="position:absolute;left:881px;top:463px" width="15" height="16"><path d="M1.5 0.5H10L13.5 4V15.5H1.5Z" fill="#dfe6ee" stroke="#7a7a7a"/><path d="M9.5 0.5V4.5H13.5" fill="#fff" stroke="#7a8a9a"/></svg>
<div class="t" style="left:901px;top:465px;line-height:14px;font-size:12px;letter-spacing:0.17px">Unalloc_211630_106061824...</div>
<div style="left:1926px;top:463px;width:83px;height:16px;overflow:hidden"><div class="t" style="right:-5px;top:2px;line-height:14px;letter-spacing:0.25px;">10,485,76</div></div>
<div style="left:653px;top:479px;width:55px;height:16px;background:#f2f2f2"></div>
<div style="left:776px;top:479px;width:1233px;height:16px;background:#f2f2f2"></div>
<div class="t" style="left:658px;top:481px;line-height:14px;font-size:12px;">22</div>
<div class="rchk" style="left:710px;top:480px;width:14px;height:14px;"></div>
<div class="pb" style="left:728px;top:481px;width:46px;height:12px;"></div>
<div class="t" style="left:742px;top:481px;line-height:14px;font-size:12px;">1%</div>
<svg style="position:absolute;left:881px;top:479px" width="15" height="16"><path d="M1.5 0.5H10L13.5 4V15.5H1.5Z" fill="#dfe6ee" stroke="#7a7a7a"/><path d="M9.5 0.5V4.5H13.5" fill="#fff" stroke="#7a8a9a"/></svg>
<div class="t" style="left:901px;top:481px;line-height:14px;font-size:12px;letter-spacing:0.17px">Unalloc_211630_106061824...</div>
<div style="left:1926px;top:479px;width:83px;height:16px;overflow:hidden"><div class="t" style="right:-5px;top:2px;line-height:14px;letter-spacing:0.25px;">10,485,76</div></div>
<div class="t" style="left:658px;top:497px;line-height:14px;font-size:12px;">23</div>
<div class="rchk" style="left:710px;top:496px;width:14px;height:14px;"></div>
<div class="pb" style="left:728px;top:497px;width:46px;height:12px;"></div>
<div class="t" style="left:742px;top:497px;line-height:14px;font-size:12px;">1%</div>
<svg style="position:absolute;left:881px;top:495px" width="15" height="16"><path d="M1.5 0.5H10L13.5 4V15.5H1.5Z" fill="#dfe6ee" stroke="#7a7a7a"/><path d="M9.5 0.5V4.5H13.5" fill="#fff" stroke="#7a8a9a"/></svg>
<div class="t" style="left:901px;top:497px;line-height:14px;font-size:12px;letter-spacing:0.17px">Unalloc_211630_106061824...</div>
<div style="left:1926px;top:495px;width:83px;height:16px;overflow:hidden"><div class="t" style="right:-5px;top:2px;line-height:14px;letter-spacing:0.25px;">10,485,76</div></div>
<div style="left:653px;top:511px;width:55px;height:16px;background:#f2f2f2"></div>
<div style="left:776px;top:511px;width:1233px;height:16px;background:#f2f2f2"></div>
<div class="t" style="left:658px;top:513px;line-height:14px;font-size:12px;">24</div>
<div class="rchk" style="left:710px;top:512px;width:14px;height:14px;"></div>
<div class="pb" style="left:728px;top:513px;width:46px;height:12px;"></div>
<div class="t" style="left:742px;top:513px;line-height:14px;font-size:12px;">1%</div>
<svg style="position:absolute;left:881px;top:511px" width="15" height="16"><path d="M1.5 0.5H10L13.5 4V15.5H1.5Z" fill="#dfe6ee" stroke="#7a7a7a"/><path d="M9.5 0.5V4.5H13.5" fill="#fff" stroke="#7a8a9a"/></svg>
<div class="t" style="left:901px;top:513px;line-height:14px;font-size:12px;letter-spacing:0.17px">pagefile.sys_0</div>
<div class="t" style="left:1081px;top:513px;line-height:14px;font-size:12px;letter-spacing:0.17px">sys</div>
<div class="t" style="left:1131px;top:513px;line-height:14px;font-size:12px;letter-spacing:0.1px">sys</div>
<div style="left:1926px;top:511px;width:83px;height:16px;overflow:hidden"><div class="t" style="right:-5px;top:2px;line-height:14px;letter-spacing:0.25px;">10,485,76</div></div>
<div class="t" style="left:658px;top:529px;line-height:14px;font-size:12px;">25</div>
<div class="rchk" style="left:710px;top:528px;width:14px;height:14px;"></div>
<div class="pb" style="left:728px;top:529px;width:46px;height:12px;"></div>
<div class="t" style="left:742px;top:529px;line-height:14px;font-size:12px;">1%</div>
<svg style="position:absolute;left:881px;top:527px" width="15" height="16"><path d="M1.5 0.5H10L13.5 4V15.5H1.5Z" fill="#dfe6ee" stroke="#7a7a7a"/><path d="M9.5 0.5V4.5H13.5" fill="#fff" stroke="#7a8a9a"/></svg>
<div class="t" style="left:901px;top:529px;line-height:14px;font-size:12px;letter-spacing:0.17px">pagefile.sys_17</div>
<div class="t" style="left:1081px;top:529px;line-height:14px;font-size:12px;letter-spacing:0.17px">sys</div>
<div class="t" style="left:1131px;top:529px;line-height:14px;font-size:12px;letter-spacing:0.1px">sys</div>
<div style="left:1926px;top:527px;width:83px;height:16px;overflow:hidden"><div class="t" style="right:-5px;top:2px;line-height:14px;letter-spacing:0.25px;">10,485,76</div></div>
<div style="left:653px;top:543px;width:55px;height:16px;background:#f2f2f2"></div>
<div style="left:776px;top:543px;width:1233px;height:16px;background:#f2f2f2"></div>
<div class="t" style="left:658px;top:545px;line-height:14px;font-size:12px;">26</div>
<div class="rchk" style="left:710px;top:544px;width:14px;height:14px;"></div>
<div class="pb" style="left:728px;top:545px;width:46px;height:12px;"></div>
<div class="t" style="left:742px;top:545px;line-height:14px;font-size:12px;">1%</div>
<svg style="position:absolute;left:881px;top:543px" width="15" height="16"><path d="M1.5 0.5H10L13.5 4V15.5H1.5Z" fill="#dfe6ee" stroke="#7a7a7a"/><path d="M9.5 0.5V4.5H13.5" fill="#fff" stroke="#7a8a9a"/></svg>
<div class="t" style="left:901px;top:545px;line-height:14px;font-size:12px;letter-spacing:0.17px">pagefile.sys_9</div>
<div class="t" style="left:1081px;top:545px;line-height:14px;font-size:12px;letter-spacing:0.17px">sys</div>
<div class="t" style="left:1131px;top:545px;line-height:14px;font-size:12px;letter-spacing:0.1px">sys</div>
<div style="left:1926px;top:543px;width:83px;height:16px;overflow:hidden"><div class="t" style="right:-5px;top:2px;line-height:14px;letter-spacing:0.25px;">10,485,76</div></div>
<div class="t" style="left:658px;top:561px;line-height:14px;font-size:12px;">27</div>
<div class="rchk" style="left:710px;top:560px;width:14px;height:14px;"></div>
<div class="pb" style="left:728px;top:561px;width:46px;height:12px;"></div>
<div class="t" style="left:742px;top:561px;line-height:14px;font-size:12px;">1%</div>
<svg style="position:absolute;left:881px;top:559px" width="15" height="16"><path d="M1.5 0.5H10L13.5 4V15.5H1.5Z" fill="#dfe6ee" stroke="#7a7a7a"/><path d="M9.5 0.5V4.5H13.5" fill="#fff" stroke="#7a8a9a"/></svg>
<div class="t" style="left:901px;top:561px;line-height:14px;font-size:12px;letter-spacing:0.17px">Unalloc_211630_106061824...</div>
<div style="left:1926px;top:559px;width:83px;height:16px;overflow:hidden"><div class="t" style="right:-5px;top:2px;line-height:14px;letter-spacing:0.25px;">10,485,76</div></div>
<div style="left:653px;top:595px;width:1356px;height:16px;background:linear-gradient(#eceef0,#f6f7f8);border-top:1px solid #8f9398;border-bottom:1px solid #9ea2a7"></div>
<div style="left:653px;top:595px;width:1339px;height:16px;background:linear-gradient(#b3b6bb,#cdd0d4 35%,#dcdee2);border-top:1px solid #70747a;border-bottom:1px solid #9ea2a7;border-bottom-right-radius:12px 15px"></div>
<div style="left:653px;top:596px;width:17px;height:14px;background:linear-gradient(#e9eaec,#f4f5f6)"></div>
<div style="left:670px;top:596px;width:92px;height:14px;border:1px solid #2d4256;border-top:none;border-radius:0 0 10px 10px/0 0 14px 14px;background:linear-gradient(#f3f8fb,#bfd0e0 50%,#e3eef5)"></div>
<svg style="position:absolute;left:657px;top:599px" width="8" height="8"><path d="M7 0V7L0 3.5Z" fill="#3c3c3c"/></svg>
<svg style="position:absolute;left:1997px;top:599px" width="8" height="8"><path d="M0 0V7L7 3.5Z" fill="#3c3c3c"/></svg>
<div style="left:647px;top:620px;width:1368px;height:524px;border:1px solid #4f5359;border-radius:5px 5px 0 0;background:#d6d9df"></div>
<div style="left:649px;top:646px;width:1363px;height:495px;background:#fff;border-right:1px solid #e4e6e9;border-bottom:1px solid #e4e6e9"></div>
<div style="left:648px;top:621px;width:1366px;height:24px;background:#d6d9df;border-radius:0 5px 0 0"></div>
<div style="left:648px;top:644px;width:142px;height:1px;background:#55595f"></div>
<div style="left:867px;top:644px;width:1147px;height:1px;background:#55595f"></div>
<div style="left:790px;top:621px;width:78px;height:24px;border-right:1px solid #55595f;border-left:1px solid #55595f;border-radius:5px 5px 0 0;background:linear-gradient(#abaeb3,#c9ccd1 55%,#d6d9de)"></div>
<div style="left:684px;top:621px;width:1px;height:24px;background:#55595f"></div>
<div style="left:722px;top:621px;width:1px;height:24px;background:#55595f"></div>
<div class="t" style="left:655px;top:627px;line-height:14px;font-size:12px;">Hex</div>
<div class="t" style="left:692px;top:627px;line-height:14px;font-size:12px;">Text</div>
<div class="t" style="left:729px;top:627px;line-height:14px;font-size:12px;">Metadata</div>
<svg style="position:absolute;left:796px;top:627px" width="10" height="13"><path d="M3.5 0.5H9.5V12.5H0.5V3.5Z" fill="#fff" stroke="#444"/><path d="M0.5 3.5L3.5 0.5V3.5Z" fill="#999"/></svg>
<div class="t" style="left:816px;top:627px;line-height:14px;font-size:12px;">Preview</div>
<svg style="position:absolute;left:1874px;top:627px" width="36" height="13"><path d="M0.5 6L6 0.5V4H15V9H6V12Z" fill="#2b2222"/><path d="M35 6L29.5 0.5V4H20.5V9H29.5V12Z" fill="#2b2222"/></svg>
<svg style="position:absolute;left:1913px;top:624px" width="18" height="18"><path d="M11 1L17 7L14 8L11 11L12 14L10 13L5 8L4 6L7 7L10 4Z" fill="#000"/><path d="M7 11L1 17" stroke="#000" stroke-width="1.2"/></svg>
<svg style="position:absolute;left:1937px;top:630px" width="11" height="7"><path d="M1 1L5.5 5.5L10 1" stroke="#8a8a8a" stroke-width="1.6" fill="none"/></svg>
<div style="left:1953px;top:623px;width:1px;height:20px;background:#a3a6ab"></div>
<svg style="position:absolute;left:1958px;top:626px" width="54" height="16"><rect x="1" y="9" width="12" height="5" rx="2" fill="#fff" opacity="0.8"/><rect x="2" y="10" width="8" height="3" fill="#000"/><rect x="18" y="5" width="14" height="11" rx="2" fill="#fff" opacity="0.7"/><rect x="19.5" y="5.5" width="9" height="8" fill="#fff" stroke="#000"/><rect x="19" y="5" width="10" height="2.5" fill="#000"/><rect x="21" y="9.5" width="6" height="1.5" fill="#d0d3d8"/><path d="M27 7Q27 3.5 30.5 3.5" stroke="#fff" stroke-width="3" fill="none"/><path d="M27 7Q27 3.5 30.5 3.5" stroke="#000" stroke-width="1.4" fill="none"/><path d="M30 0.5L33.5 3.5L30 6.5Z" fill="#000"/><rect x="39" y="3" width="14" height="12" rx="2" fill="#fff" opacity="0.8"/><rect x="40.5" y="5.5" width="11" height="8" fill="#fff" stroke="#000"/><rect x="40" y="5" width="12" height="3" fill="#000"/><rect x="42" y="10" width="8" height="1.5" fill="#d0d3d8"/></svg>
<div class="t" style="left:650px;top:647px;line-height:16px;font-size:14px"><b>Client submit time:</b> Mar 23, 2015 17:29:27.000000000 UTC</div>
<div class="t" style="left:650px;top:663px;line-height:16px;font-size:14px"><b>Delivery time:</b> Mar 23, 2015 17:29:29.181071700 UTC</div>
<div class="t" style="left:650px;top:679px;line-height:16px;font-size:14px"><b>Creation time:</b> Mar 23, 2015 17:29:29.087320500 UTC</div>
<div class="t" style="left:650px;top:695px;line-height:16px;font-size:14px"><b>Size:</b> 13514</div>
<div class="t" style="left:650px;top:711px;line-height:16px;font-size:14px"><b>Flags:</b> 0x00000001 (Read)</div>
<div class="t" style="left:650px;top:727px;line-height:16px;font-size:14px"><b>Conversation topic:</b> Hello, Iaman</div>
<div class="t" style="left:650px;top:743px;line-height:16px;font-size:14px"><b>Subject:</b> Hello, Iaman</div>
<div class="t" style="left:650px;top:759px;line-height:16px;font-size:14px"><b>Importance:</b> Normal</div>
<div class="t" style="left:650px;top:775px;line-height:16px;font-size:14px"><b>Priority:</b> Normal</div>
<div class="t" style="left:650px;top:791px;line-height:16px;font-size:14px"><b>Sensitivity:</b> None</div>
<div class="t" style="left:650px;top:807px;line-height:16px;font-size:14px"><b>Is a reminder:</b> no</div>
<div class="t" style="left:650px;top:823px;line-height:16px;font-size:14px"><b>Is private:</b> no</div>
<div class="t" style="left:650px;top:839px;line-height:16px;font-size:14px"><b>From:</b> spy &lt;/O=EXCHANGELABS/OU=EXCHANGE ADMINISTRATIVE GROUP (FYDIBOHF23SPDLT)/CN=RECIPIENTS/CN=16DEB821A6D2423FB723680AE0D2B36A-SPY&gt;</div>
<div class="t" style="left:650px;top:855px;line-height:16px;font-size:14px"><b>TO:</b> iaman &lt;/o=ExchangeLabs/ou=Exchange Administrative Group (FYDIBOHF23SPDLT)/cn=Recipients/cn=25fb3fee58f74a5497f8807234114f65-iaman&gt;</div>
<div style="left:650px;top:878px;width:1362px;height:1px;background:#9a9a9a"></div>
<div class="t" style="left:650px;top:886px;line-height:16px;font-size:14px;letter-spacing:-0.3px">How are you doing?</div>
<div style="left:650px;top:929px;width:1362px;height:1px;background:#9a9a9a"></div>
<div style="left:648px;top:930px;width:1364px;height:211px;overflow:hidden">
<div class="t" style="left:2px;top:7px;line-height:14px;font-size:12px;">Internet Headers:</div>
<div class="t" style="left:2px;top:21px;line-height:14px;font-size:12px;">Received: from BN1PR09MB106.namprd09.prod.outlook.com (10.255.199.152) by BL2PR09MB099.namprd09.prod.outlook.com (10.255.230.152) with Microsoft SMTP Server (TLS) id 15.1.106.15 via Mailbox Transport; Mon, 23 Mar 2015 17:29:28 +0000</div>
<div class="t" style="left:2px;top:35px;line-height:14px;font-size:12px;">Received: from BN1PR09MB0156.namprd09.prod.outlook.com (10.255.192.146) by BN1PR09MB106.namprd09.prod.outlook.com (10.255.199.152) with Microsoft SMTP Server (TLS) id 15.1.99.14; Mon, 23 Mar 2015 17:29:27 +0000</div>
<div class="t" style="left:2px;top:49px;line-height:14px;font-size:12px;">Received: from BN1PR09MB0156.namprd09.prod.outlook.com ([10.255.192.146]) by BN1PR09MB0156.namprd09.prod.outlook.com ([10.255.192.146]) with mapi id 15.01.0112.000; Mon, 23 Mar 2015 17:29:28 +0000</div>
<div class="t" style="left:2px;top:63px;line-height:14px;font-size:12px;">Content-Type: application/ms-tnef; name="winmail.dat"</div>
<div class="t" style="left:2px;top:77px;line-height:14px;font-size:12px;">Content-Transfer-Encoding: binary</div>
<div class="t" style="left:2px;top:91px;line-height:14px;font-size:12px;">From: spy &lt;spy.conspirator@nist.gov&gt;</div>
<div class="t" style="left:2px;top:105px;line-height:14px">To: iaman &lt;<span style="background:#0000ee;color:#fff;font-weight:bold">iaman.informant@nist.gov</span>&gt;</div>
<div class="t" style="left:2px;top:119px;line-height:14px;font-size:12px;">Subject: Hello, Iaman</div>
<div class="t" style="left:2px;top:133px;line-height:14px;font-size:12px;">Thread-Topic: Hello, Iaman</div>
<div class="t" style="left:2px;top:147px;line-height:14px;font-size:12px;">Thread-Index: AdBljiMTazfn92nEQs+TAeoYNpc6lw==</div>
<div class="t" style="left:2px;top:161px;line-height:14px;font-size:12px;">Date: Mon, 23 Mar 2015 17:29:27 +0000</div>
<div class="t" style="left:2px;top:175px;line-height:14px;font-size:12px;">Message-ID: &lt;BN1PR09MB0156C790B3BF198BDDCD14748C0D0@BN1PR09MB0156.namprd09.prod.outlook.com&gt;</div>
<div class="t" style="left:2px;top:189px;line-height:14px;font-size:12px;">Accept-Language: en-US</div>
<div class="t" style="left:2px;top:203px;line-height:14px;font-size:12px;">Content-Language: en-US</div>
</div>
<div style="left:0;top:1144px;width:2016px;height:17px;overflow:hidden"><div class="t" style="left:0px;top:7px;line-height:14px;font-size:12px;letter-spacing:0.09px">desktop.E01/vol_vol3/Users/informant/AppData/Local/Microsoft/Outlook/iaman.informant@nist.gov.ost&gt;&gt;[root]/Root - Mailbox/IPM_SUBTREE/Inbox/Hello, Iaman</div></div>
</body></html>
